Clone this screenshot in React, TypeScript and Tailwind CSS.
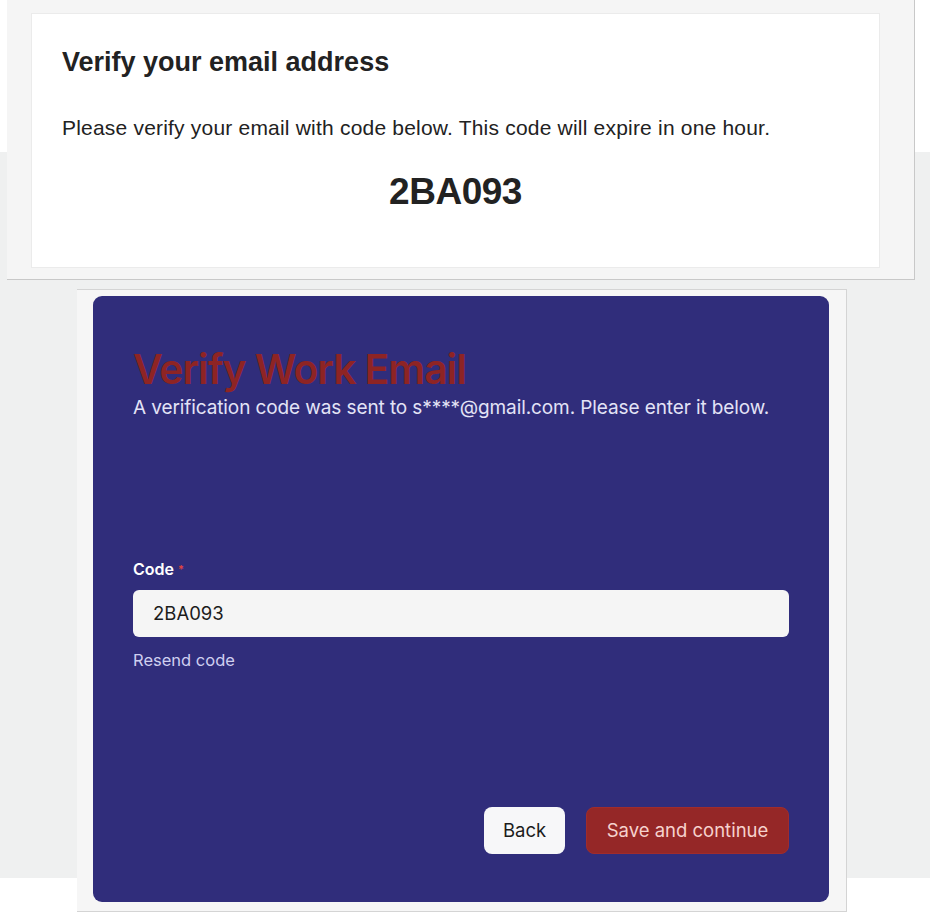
const EmailPreview = () => {
  return (
    <div className="ml-[7px] w-[908px] h-[280px] bg-[#f5f5f5] border-r border-b border-[#c8c8c8] pt-[13px] pl-[24px]">
      <div
        className="w-[849px] h-[255px] bg-white border border-[#ebebeb] pl-[30px] text-[#222]"
        style={{ fontFamily: '"Liberation Sans", Arial, sans-serif' }}
      >
        <h1 className="mt-[32px] text-[27px] leading-[32px] font-bold">
          Verify your email address
        </h1>
        <p className="mt-[36px] text-[21px] leading-[28px] tracking-[0.2px]">
          Please verify your email with code below. This code will expire in one hour.
        </p>
        <div className="mt-[28px] pr-[30px] text-center text-[37px] leading-[44px] font-bold tracking-[-0.5px]">
          2BA093
        </div>
      </div>
    </div>
  );
};

const VerifyForm = () => {
  return (
    <div className="mt-[9px] ml-[77px] w-[770px] h-[623px] bg-[#f6f6f6] border-r border-b border-t border-[#d4d4d4] pt-[6px] pl-[16px]">
      <div
        className="w-[736px] h-[606px] rounded-[9px] bg-[#302d7b] px-[40px] flex flex-col"
        style={{ fontFamily: "Inter, sans-serif" }}
      >
        <h2 className="mt-[48px] text-[41px] leading-[50px] font-semibold tracking-[-1.1px] text-[#8e2424]">
          Verify Work Email
        </h2>
        <p className="mt-[2px] text-[19px] leading-[24px] text-[#e3e3f6] tracking-[-0.1px]">
          A verification code was sent to s****@gmail.com. Please enter it below.
        </p>
        <label className="mt-[139px] text-[16px] leading-[20px] font-semibold text-white">
          Code <span className="text-[#e0443e] text-[11px] align-top">*</span>
        </label>
        <div className="mt-[11px] h-[47px] rounded-[6px] bg-[#f5f5f5] flex items-center px-[20px] text-[18.5px] text-[#1c1c1c]">
          2BA093
        </div>
        <div className="mt-[12px] text-[16.5px] leading-[22px] text-[#cfcff0]">Resend code</div>
        <div className="mt-auto mb-[48px] flex justify-end gap-[21px]">
          <button className="w-[81px] h-[47px] rounded-[8px] bg-[#f7f7f9] text-[18.5px] text-[#1c1c1c]">
            Back
          </button>
          <button className="w-[203px] h-[47px] rounded-[8px] bg-[#952727] border border-[#a02c2c] text-[18.5px] text-[#f6d2cd]">
            Save and continue
          </button>
        </div>
      </div>
    </div>
  );
};

export default function App() {
  return (
    <div className="w-[930px] h-[912px] overflow-hidden bg-[linear-gradient(to_bottom,#ffffff_152px,#eff0f0_152px,#eff0f0_878px,#ffffff_878px)]">
      <EmailPreview />
      <VerifyForm />
    </div>
  );
}
